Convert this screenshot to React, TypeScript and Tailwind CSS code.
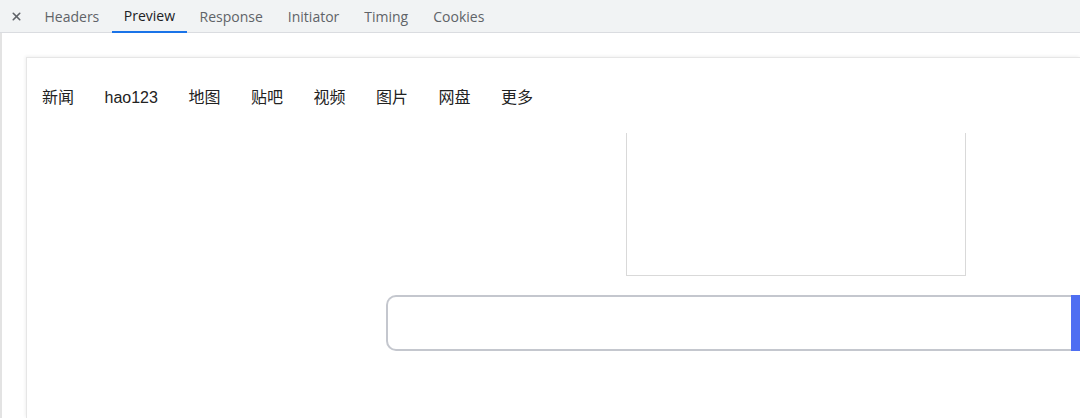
import { X } from 'lucide-react';

const tabs = ['Headers', 'Preview', 'Response', 'Initiator', 'Timing', 'Cookies'];
const links = ['新闻', 'hao123', '地图', '贴吧', '视频', '图片', '网盘', '更多'];

export default function App() {
  return (
    <div className="w-[1080px] h-[418px] overflow-hidden bg-white flex flex-col" style={{ fontFamily: '"Open Sans", "Noto Sans CJK SC", sans-serif' }}>
      {/* DevTools tab strip */}
      <div className="h-[33px] shrink-0 flex items-stretch bg-[#f1f3f4] border-b border-[#dadce0] text-[14px]">
        <div className="w-[32px] flex items-center justify-center text-[#5f6368]">
          <X className="w-[13px] h-[13px]" strokeWidth={3} />
        </div>
        {tabs.map((t) => (
          <div
            key={t}
            className={
              t === 'Preview'
                ? 'px-[12px] flex items-center border-b-2 border-[#1a73e8] text-[#202124] -mb-px'
                : 'px-[12.5px] flex items-center text-[#5f6368]'
            }
          >
            {t}
          </div>
        ))}
      </div>

      {/* Preview pane */}
      <div className="flex-1 flex border-l-2 border-[#e3e3e3] pl-[24px] pt-[24px]">
        <div className="flex-1 flex flex-col border-l border-t border-[#e6e6e6] shadow-[-1px_-1px_3px_rgba(0,0,0,0.06)] overflow-hidden">
          <nav
            className="h-[75px] shrink-0 flex items-center gap-[30.5px] pl-[15px] pt-[4px] text-[16px] text-[#222]"
            style={{ fontFamily: '"Liberation Sans", "Noto Sans CJK SC", sans-serif' }}
          >
            {links.map((l) => (
              <span key={l}>{l}</span>
            ))}
          </nav>
          <div className="flex pl-[599px]">
            <div className="w-[340px] h-[143px] shrink-0 border border-t-0 border-[#d9d9d9]" />
          </div>
          <div className="flex pl-[359px] pt-[19px]">
            <div className="w-[685px] h-[56px] shrink-0 border-2 border-[#c4c7ce] border-r-0 rounded-l-[10px] bg-white" />
            <div className="w-[40px] h-[56px] shrink-0 bg-[#4e6ef2]" />
          </div>
        </div>
      </div>
    </div>
  );
}
